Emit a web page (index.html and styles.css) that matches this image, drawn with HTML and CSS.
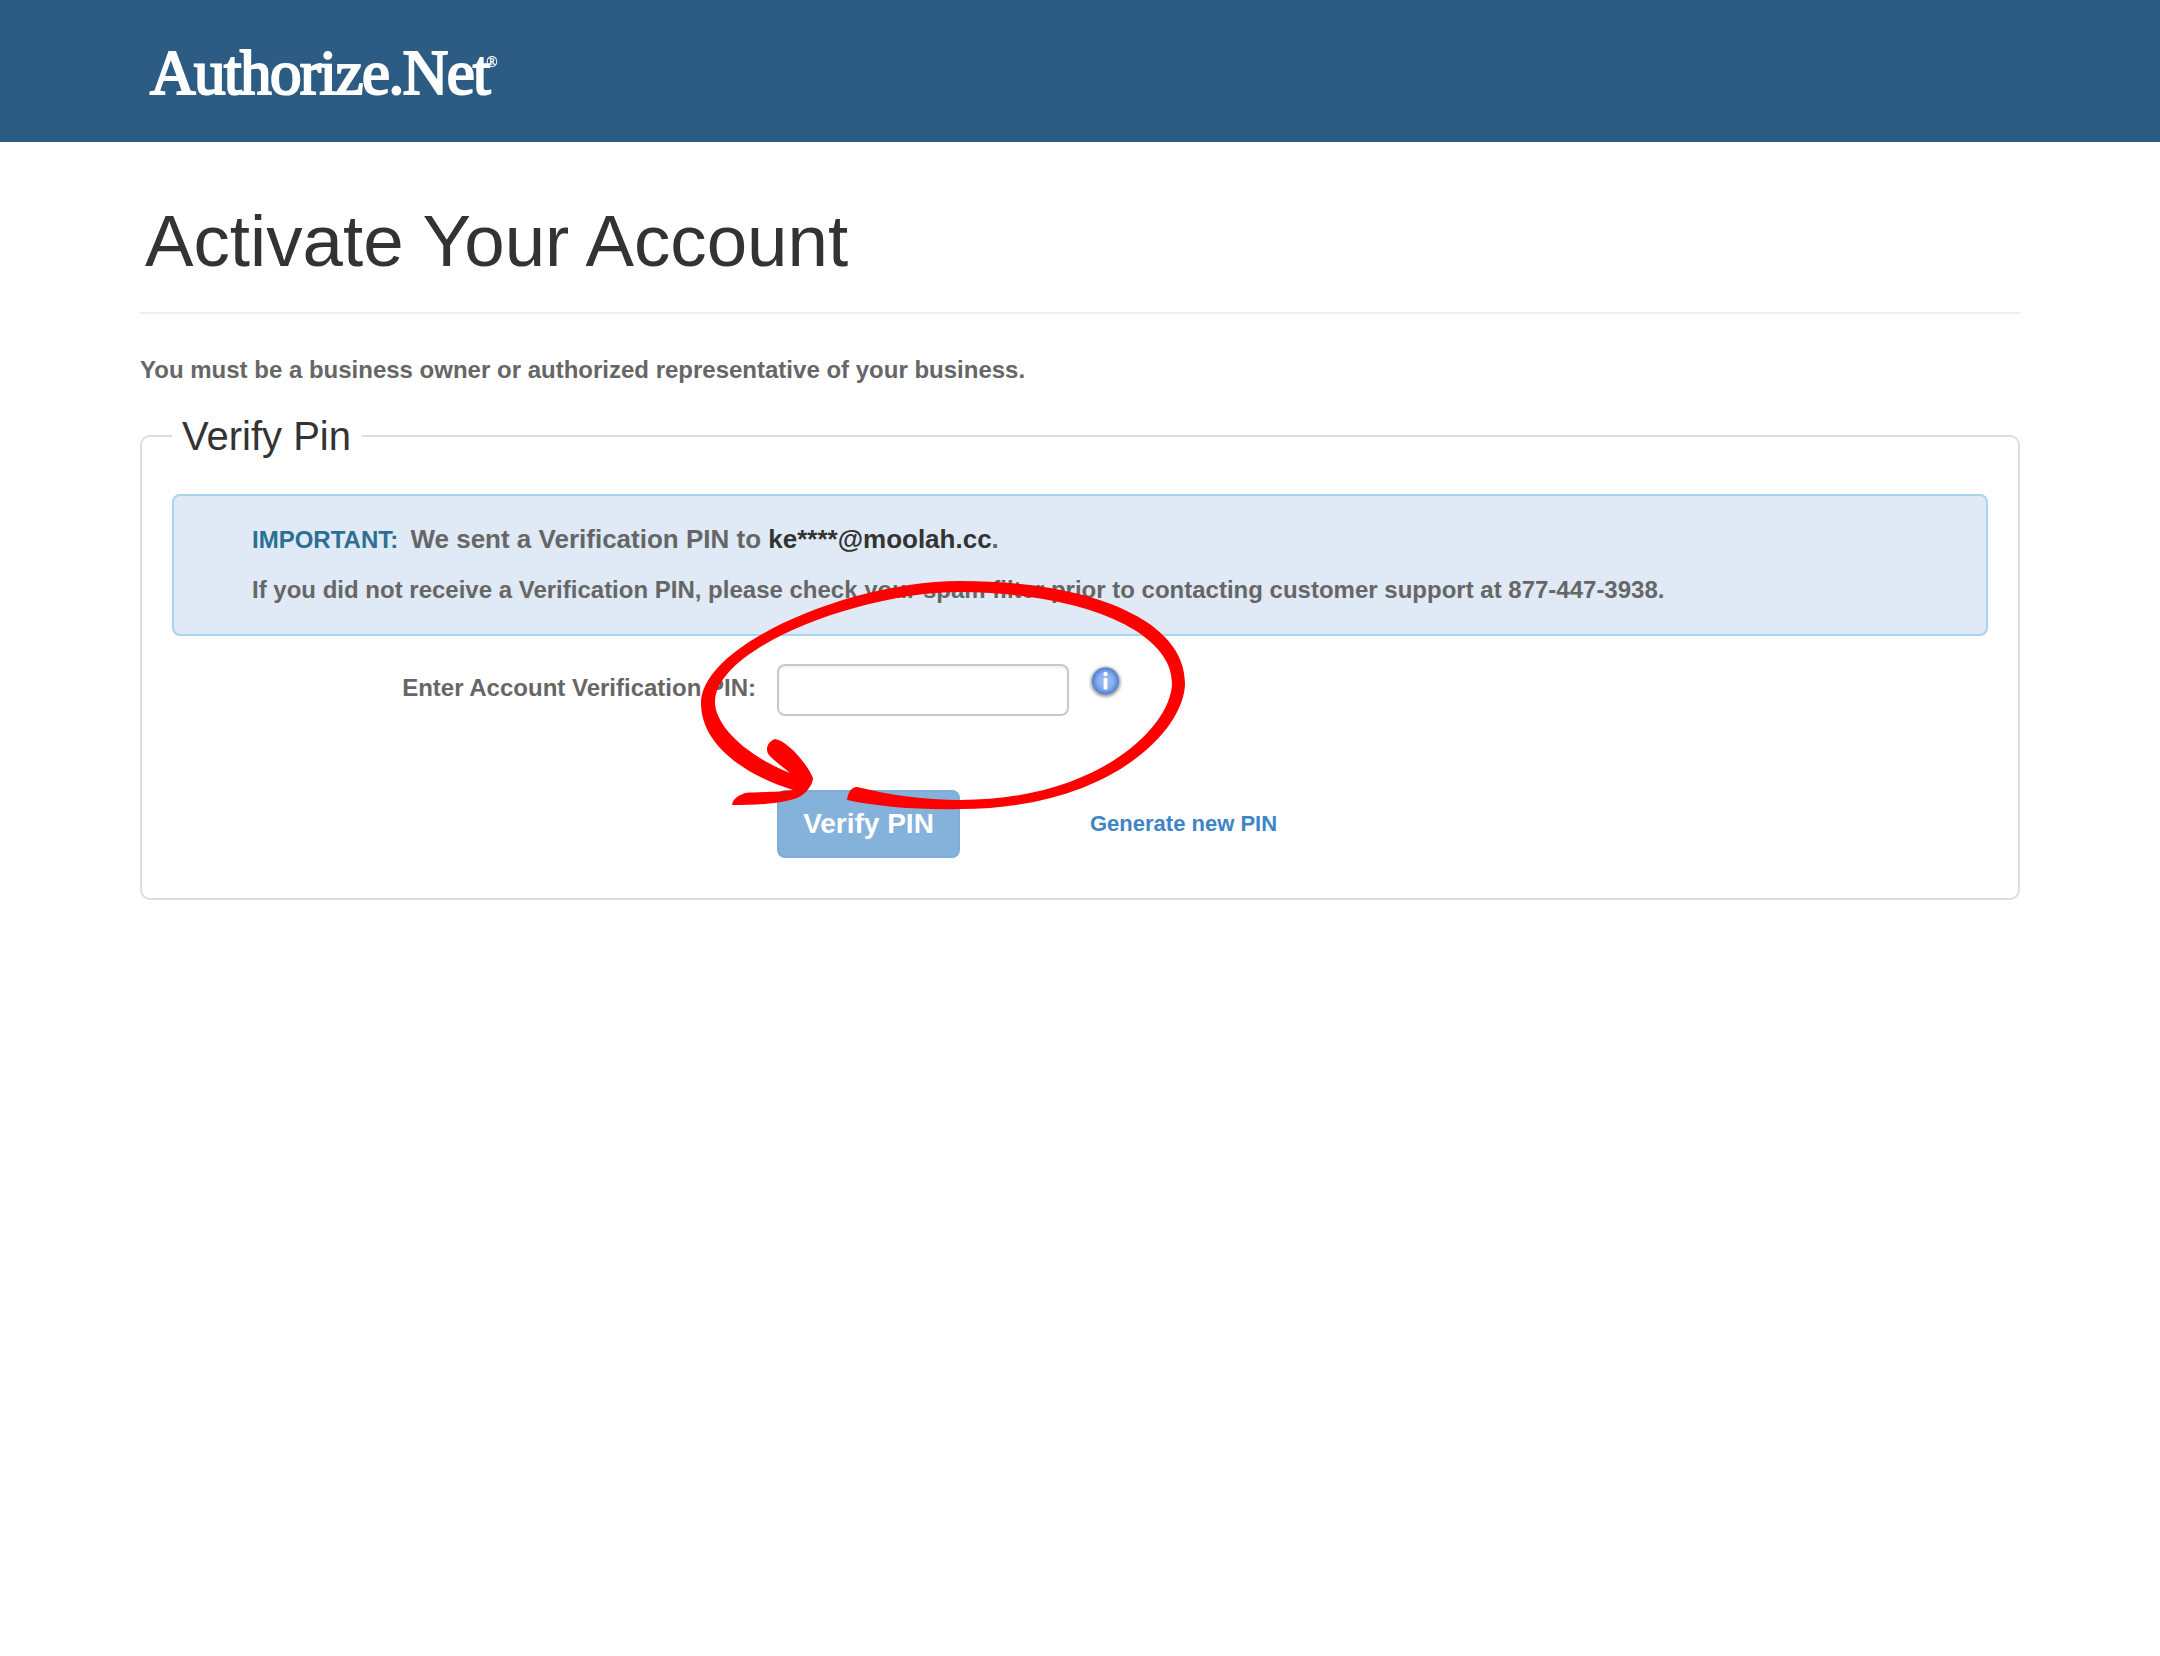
FILE: index.html
```html
<!DOCTYPE html>
<html lang="en">
<head>
<meta charset="utf-8">
<title>Activate Your Account</title>
<link rel="stylesheet" href="styles.css">
</head>
<body>
<header class="topbar">
  <div class="logo">Authorize.Net<sup class="reg">®</sup></div>
</header>
<main class="page">
  <h1 class="title">Activate Your Account</h1>
  <p class="lead">You must be a business owner or authorized representative of your business.</p>
  <fieldset class="panel">
    <legend class="panel-legend">Verify Pin</legend>
    <div class="alert">
      <p class="alert-first"><span class="alert-tag">IMPORTANT:</span> We sent a Verification PIN to <span class="alert-email">ke****@moolah.cc</span>.</p>
      <p class="alert-second">If you did not receive a Verification PIN, please check your spam filter prior to contacting customer support at 877-447-3938.</p>
    </div>
    <form class="pin-form">
      <label class="pin-label" for="pin">Enter Account Verification PIN:</label>
      <div class="pin-field">
        <input class="pin-input" id="pin" type="text">
        <svg class="info-icon" viewBox="0 0 34 36" aria-hidden="true">
          <defs>
            <radialGradient id="infoFill" cx="50%" cy="50%" r="50%">
              <stop offset="0" stop-color="#a3c3f6"/>
              <stop offset="0.6" stop-color="#86acef"/>
              <stop offset="1" stop-color="#4f7ed2"/>
            </radialGradient>
            <filter id="infoHalo" x="-30%" y="-30%" width="160%" height="160%"><feGaussianBlur stdDeviation="1.5"/></filter>
            <filter id="infoSoft" x="-10%" y="-10%" width="120%" height="120%"><feGaussianBlur stdDeviation="0.4"/></filter>
          </defs>
          <circle cx="16.5" cy="19" r="15" fill="#4a4f5a" opacity="0.55" filter="url(#infoHalo)"/>
          <g filter="url(#infoSoft)">
            <circle cx="16.5" cy="18" r="13.5" fill="url(#infoFill)"/>
            <circle cx="16.5" cy="11" r="2.2" fill="#fff"/>
            <rect x="14.6" y="15" width="3.8" height="11.5" rx="0.8" fill="#fff"/>
          </g>
        </svg>
      </div>
      <div class="pin-actions">
        <button class="verify-btn" type="button">Verify PIN</button>
        <a class="new-pin" href="#">Generate new PIN</a>
      </div>
    </form>
  </fieldset>
</main>
<svg class="scribble" viewBox="0 0 660 320" aria-hidden="true">
  <path fill="#ff0000" d="M207 240 C208 233 211 227 217 227 C250 235 285 240 320 240 C460 240 532 165 532 123 C532 72 445 33 320 32 C220 32 75 88 75 142 C75 165 105 195 150 213 C143 207 133 200 129 195 C125 190 127 182 135 179 C148 181 168 205 173 218 C173 225 165 235 157 238 C140 244 115 245 92 245 C93 240 95 237 105 233 C120 232 140 232 153 230 C105 215 61 185 61 143 C61 85 210 21 320 21 C450 21 545 60 545 123 C545 170 470 249 320 249 C280 250 240 247 207 240 Z"/>
</svg>
</body>
</html>
```

FILE: styles.css
```css
* { box-sizing: border-box; }
html, body { margin: 0; padding: 0; background: #fff; }
body {
  position: relative;
  min-height: 1656px;
  font-family: "Liberation Sans", Arial, sans-serif;
  color: #666;
}
.topbar {
  height: 142px;
  background: #2c5c83;
  padding: 40px 0 0 150px;
}
.logo {
  font-family: "Liberation Serif", "Times New Roman", serif;
  font-size: 63px;
  line-height: 66px;
  letter-spacing: -1.5px;
  color: #fff;
  white-space: nowrap;
  -webkit-text-stroke: 2.2px #fff;
  filter: blur(0.5px);
}
.reg {
  font-size: 15px;
  line-height: 0;
  vertical-align: 27px;
  letter-spacing: 0;
  margin-left: -3px;
  -webkit-text-stroke: 0.3px #fff;
}
.page { padding: 0 140px; }
.title {
  margin: 0;
  padding: 57px 0 0 5px;
  height: 172px;
  font-size: 72.7px;
  line-height: 84px;
  font-weight: normal;
  color: #333;
  border-bottom: 2px solid #eee;
}
.lead {
  margin: 42px 0 0;
  font-size: 24px;
  line-height: 28px;
  font-weight: bold;
}
.panel {
  margin: 30px 0 0;
  padding: 36px 30px 40px;
  min-width: 0;
  border: 2px solid #ddd;
  border-radius: 10px;
}
.panel-legend {
  padding: 0 11px 0 10px;
  font-size: 40px;
  line-height: 44px;
  color: #333;
}
.alert {
  height: 142px;
  padding: 28px 0 0 78px;
  background: #dfeaf6;
  border: 2px solid #a8d4ee;
  border-radius: 8px;
  font-weight: bold;
}
.alert-first {
  margin: 0;
  font-size: 26px;
  line-height: 30px;
}
.alert-second {
  margin: 21px 0 0;
  font-size: 24px;
  line-height: 28px;
}
.alert-tag { color: #2b6f94; font-size: 24px; margin-right: 5px; }
.alert-email { color: #333; }
.pin-form {
  display: grid;
  grid-template-columns: 584px 1fr;
  column-gap: 21px;
  margin-top: 28px;
}
.pin-label {
  justify-self: end;
  padding-top: 10px;
  font-size: 24px;
  line-height: 28px;
  font-weight: bold;
  white-space: nowrap;
}
.pin-field {
  display: flex;
  align-items: flex-start;
  gap: 20px;
}
.pin-input {
  width: 292px;
  height: 52px;
  border: 2px solid #c8c8c8;
  border-radius: 8px;
  background: #fff;
  box-shadow: inset 0 2px 2px rgba(0, 0, 0, 0.06);
}
.info-icon {
  width: 34px;
  height: 36px;
  margin-top: -1px;
}
.pin-actions {
  grid-column: 2;
  display: flex;
  align-items: center;
  gap: 130px;
  margin-top: 74px;
}
.verify-btn {
  width: 183px;
  height: 68px;
  padding: 0;
  border: 2px solid #7eaed8;
  border-radius: 8px;
  background: #84b2db;
  color: #fff;
  font-family: inherit;
  font-size: 28px;
  font-weight: bold;
}
.new-pin {
  color: #3d85c6;
  font-size: 22px;
  font-weight: bold;
  text-decoration: none;
}
.scribble {
  position: absolute;
  left: 640px;
  top: 560px;
  width: 660px;
  height: 320px;
}
```
